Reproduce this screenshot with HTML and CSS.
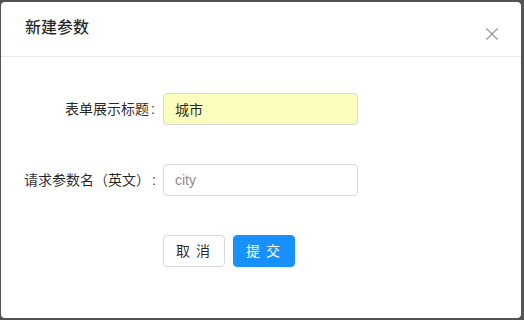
FILE: index.html
```html
<!DOCTYPE html>
<html lang="zh-CN">
  <head>
    <meta charset="UTF-8" />
    <meta name="viewport" content="width=device-width, initial-scale=1.0" />
    <title>新建参数</title>
    <link rel="stylesheet" href="styles.css">
  </head>
  <body>
    <div class="modal">
      <div class="modal-header">
        <h2>新建参数</h2>
        <button class="modal-close" aria-label="关闭">
          <svg width="12" height="12" viewBox="0 0 12 12">
            <path d="M0.5 0.5 L11.5 11.5 M11.5 0.5 L0.5 11.5" stroke="#999" stroke-width="1.3" fill="none" />
          </svg>
        </button>
      </div>
      <form class="modal-body">
        <label class="form-label" for="title">表单展示标题</label>
        <input class="form-input autofill" id="title" type="text" value="城市" />

        <label class="form-label" for="name">请求参数名（英文）</label>
        <input class="form-input" id="name" type="text" placeholder="city" />

        <div class="buttons-footer">
          <button type="button" class="btn">取消</button>
          <button type="button" class="btn btn-primary">提交</button>
        </div>
      </form>
    </div>
  </body>
</html>
```

FILE: styles.css
```css
* {
  box-sizing: border-box;
  --text-color: rgba(0, 0, 0, 0.85);
  --border-color: #d9d9d9;
  --primary-color: #1890ff;
}

body {
  margin: 0;
  padding: 2px 3px 2px 1px;
  background: #535353;
  font-family: "Liberation Sans", "Noto Sans CJK SC", sans-serif;
  font-size: 14px;
  color: var(--text-color);
}

.modal {
  width: 520px;
  height: 316px;
  background: #fff;
  border-radius: 4px;
}

.modal-header {
  display: flex;
  align-items: center;
  justify-content: space-between;
  height: 55px;
  padding: 0 24px;
  border-bottom: 1px solid #e8e8e8;

  h2 {
    margin: 0 0 2px;
    font-size: 16px;
    font-weight: 500;
    line-height: 22px;
    color: var(--text-color);
  }
}

.modal-close {
  display: flex;
  padding: 0;
  margin: 9px -1px 0 0;
  border: 0;
  background: none;
}

.modal-body {
  display: grid;
  grid-template-columns: 139px 195px;
  row-gap: 39px;
  padding: 36px 23px 0;
  align-items: center;
}

.form-label {
  text-align: right;
  white-space: nowrap;
  line-height: 32px;

  &::after {
    content: ":";
    margin: 0 8px 0 2px;
  }
}

.form-input {
  height: 32px;
  padding: 4px 11px;
  border: 1px solid var(--border-color);
  border-radius: 4px;
  font: inherit;
  color: var(--text-color);
  background: #fff;

  &::placeholder {
    color: #8c8c8c;
  }
}

.autofill {
  background: #fafdbb;
}

.buttons-footer {
  grid-column: 2;
  display: flex;
  gap: 8px;

  .btn {
    height: 32px;
    padding: 0 8px 0 12px;
    border: 1px solid var(--border-color);
    border-radius: 4px;
    background: #fff;
    font: inherit;
    color: var(--text-color);
    letter-spacing: 6px;
    line-height: 30px;
  }

  .btn-primary {
    border-color: var(--primary-color);
    background: var(--primary-color);
    color: #fff;
  }
}
```
